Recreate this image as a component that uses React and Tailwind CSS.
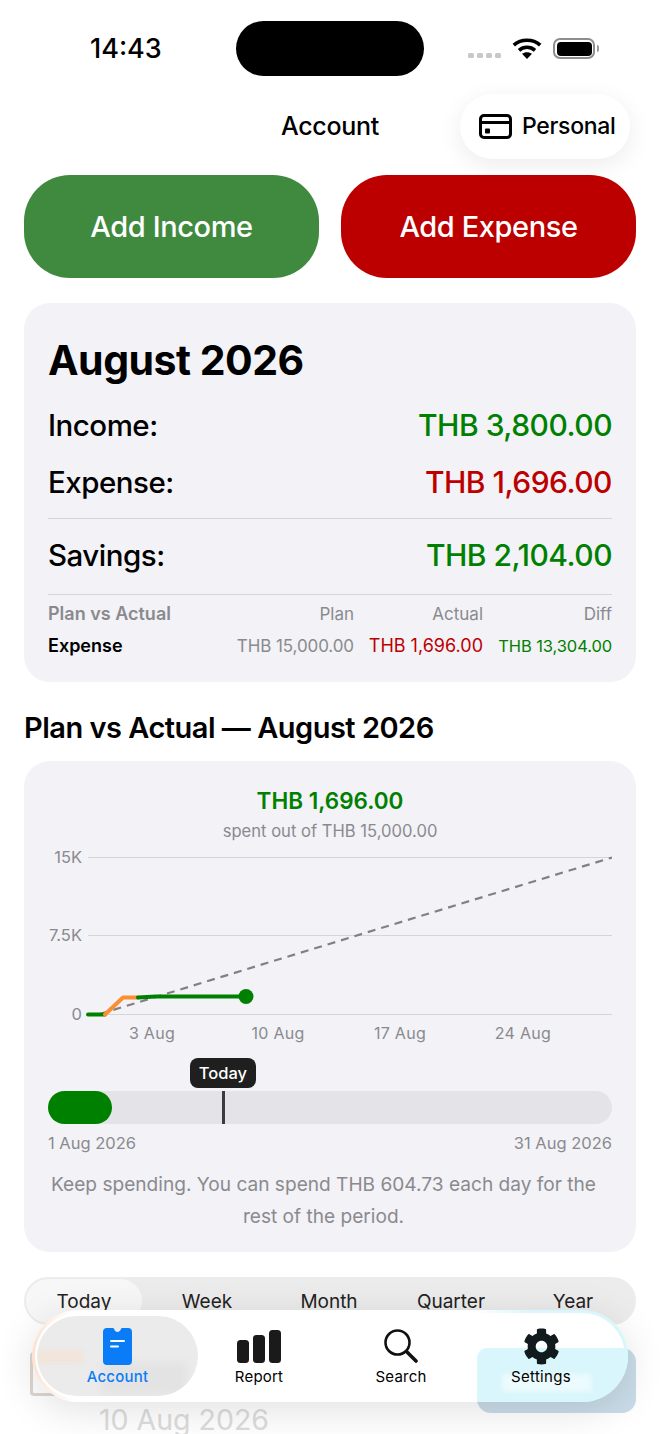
import React from 'react';
import { FaCog } from 'react-icons/fa';

const FONT = { fontFamily: 'Inter, "Liberation Sans", sans-serif' };

const SummaryRow = ({ label, value, color }) => (
  <div className="flex items-center justify-between">
    <span className="text-[29.5px] leading-[36px] font-medium tracking-[-0.5px] text-black">{label}</span>
    <span className={`text-[30px] leading-[36px] font-medium tracking-[-0.5px] ${color}`}>{value}</span>
  </div>
);

const CardIcon = () => (
  <svg width="33" height="25" viewBox="0 0 33 25" fill="none">
    <rect x="1.5" y="1.5" width="30" height="22" rx="3.5" stroke="black" strokeWidth="3" />
    <path d="M2 8.500h29" stroke="black" strokeWidth="3" />
    <rect x="6" y="14.500" width="5" height="5" rx="1" fill="black" />
  </svg>
);

const WifiIcon = () => (
  <svg width="30" height="21" viewBox="0 0 30 21" fill="none">
    <path d="M1.800 7.200C9 .6 21 .6 28.200 7.200" stroke="black" strokeWidth="3.600" />
    <path d="M7 12.300c4.500-4 11.500-4 16 0" stroke="black" strokeWidth="3.600" />
    <path d="M15 21l-5-5.200c2.800-2.200 7.200-2.200 10 0z" fill="black" />
  </svg>
);

const Chart = () => (
  <svg width="564" height="204" viewBox="0 -4 564 204" className="block" style={FONT}>
    <g stroke="#d4d4d9" strokeWidth="1">
      <line x1="40" y1="7.500" x2="564" y2="7.500" />
      <line x1="40" y1="85.500" x2="564" y2="85.500" />
      <line x1="40" y1="164.500" x2="564" y2="164.500" />
    </g>
    <g fill="#8a8a8e" fontSize="16.500" textAnchor="end">
      <text x="34" y="13">15K</text>
      <text x="34" y="91">7.5K</text>
      <text x="34" y="170">0</text>
    </g>
    <g fill="#8a8a8e" fontSize="16" letterSpacing="0.3" textAnchor="middle">
      <text x="104" y="189">3 Aug</text>
      <text x="230" y="189">10 Aug</text>
      <text x="352" y="189">17 Aug</text>
      <text x="475" y="189">24 Aug</text>
    </g>
    <line x1="52" y1="164" x2="564" y2="7.500" stroke="#808085" strokeWidth="2.200" strokeDasharray="8 6" />
    <path d="M40 164.500H57" stroke="#008000" strokeWidth="4" strokeLinecap="round" fill="none" />
    <path d="M57 164.500L75 147.500H90" stroke="#fb8f32" strokeWidth="4" strokeLinejoin="round" strokeLinecap="round" fill="none" />
    <path d="M90 147.500L108 146.500H198" stroke="#008000" strokeWidth="4" strokeLinecap="round" fill="none" />
    <circle cx="198" cy="146.500" r="7.500" fill="#008000" />
  </svg>
);

const TABS = ['Today', 'Week', 'Month', 'Quarter', 'Year'];

export default function App() {
  return (
    <div className="relative h-[1434px] w-[660px] overflow-hidden bg-white text-black" style={FONT}>
      {/* status bar */}
      <div className="flex h-[94px] items-start pt-[21px]">
        <span className="ml-[90px] mt-[10px] w-[146px] text-[27px] leading-[36px] font-medium">14:43</span>
        <div className="h-[55px] w-[188px] rounded-full bg-black" />
        <div className="ml-[44px] flex items-start pt-[17px]">
          <div className="mt-[15px] flex gap-[3px]">
            {[0, 1, 2, 3].map(i => <div key={i} className="h-[5px] w-[6px] rounded-[1.5px] bg-[#c8c8c8]" />)}
          </div>
          <div className="ml-[11px]"><WifiIcon /></div>
          <div className="relative ml-[11px] flex h-[21px] w-[42px] items-center justify-center rounded-[7px] border-2 border-[#8e8e8e] p-[1.5px]">
            <div className="h-full w-full rounded-[4px] bg-black" />
            <div className="absolute right-[-6px] h-[7px] w-[2.500px] rounded-r-full bg-[#9a9a9a]" />
          </div>
        </div>
      </div>

      {/* header */}
      <div className="relative mb-[16px] flex h-[65px] items-center justify-center">
        <span className="text-[25px] font-medium tracking-[-0.3px]">Account</span>
        <div className="absolute right-[30px] top-0 flex h-[65px] w-[170px] items-center gap-[10px] rounded-full bg-white pl-[19px] shadow-[0_6px_24px_rgba(0,0,0,0.08)]">
          <CardIcon />
          <span className="text-[23px] font-medium tracking-[-0.3px]">Personal</span>
        </div>
      </div>

      <div className="px-[24px]">
        {/* action buttons */}
        <div className="flex gap-[22px]">
          <div className="flex h-[103px] flex-1 items-center justify-center rounded-[46px] bg-[#408a40] text-[29px] font-medium tracking-[-0.4px] text-white">Add Income</div>
          <div className="flex h-[103px] flex-1 items-center justify-center rounded-[46px] bg-[#bc0000] text-[29px] font-medium tracking-[-0.4px] text-white">Add Expense</div>
        </div>

        {/* month summary */}
        <div className="mt-[25px] h-[379px] rounded-[26px] bg-[#f2f2f7] px-[24px] pt-[31px]">
          <div className="text-[41px] leading-[52px] font-bold tracking-[-0.5px]">August 2026</div>
          <div className="mt-[21px]"><SummaryRow label="Income:" value="THB 3,800.00" color="text-[#008000]" /></div>
          <div className="mt-[21px]"><SummaryRow label="Expense:" value="THB 1,696.00" color="text-[#bc0000]" /></div>
          <div className="mt-[18px] border-t border-[#d4d4d9] pt-[18px]">
            <SummaryRow label="Savings:" value="THB 2,104.00" color="text-[#008000]" />
          </div>
          <div className="mt-[21px] border-t border-[#d4d4d9] pt-[7px]">
            <div className="flex items-center text-[17px] leading-[24px] text-[#8a8a8e]">
              <span className="flex-1 text-[18px] font-semibold">Plan vs Actual</span>
              <span>Plan</span>
              <span className="w-[129px] text-right">Actual</span>
              <span className="w-[129px] text-right">Diff</span>
            </div>
            <div className="mt-[8px] flex items-center text-[17px] leading-[24px] tracking-[-0.1px]">
              <span className="flex-1 text-[18px] font-semibold tracking-normal">Expense</span>
              <span className="text-[#8a8a8e]">THB 15,000.00</span>
              <span className="w-[129px] text-right text-[18px] tracking-normal text-[#bc0000]">THB 1,696.00</span>
              <span className="w-[129px] text-right text-[16.500px] text-[#008000]">THB 13,304.00</span>
            </div>
          </div>
        </div>

        <div className="mt-[27px] h-[38px] text-[29px] leading-[38px] font-semibold tracking-[-0.5px]">Plan vs Actual — August 2026</div>

        {/* plan chart */}
        <div className="mt-[14px] h-[491px] rounded-[26px] bg-[#f2f2f7] px-[24px] pt-[25px]">
          <div className="text-center text-[22.500px] leading-[30px] font-semibold text-[#008000]">THB 1,696.00</div>
          <div className="mt-[3px] text-center text-[16.600px] leading-[24px] text-[#8a8a8e]">spent out of THB 15,000.00</div>
          <div className="mt-[3px]"><Chart /></div>
          <div className="relative mt-[41px] h-[33px] rounded-full bg-[#e3e3e8]">
            <div className="h-full w-[64px] rounded-full bg-[#008000]" />
            <div className="absolute left-[174px] top-0 h-full w-[3px] bg-[#3c3c3e]" />
            <div className="absolute left-[142px] top-[-33px] flex h-[30px] w-[66px] items-center justify-center rounded-[8px] bg-[#1f1f1f] text-[16.500px] font-medium text-white">Today</div>
          </div>
          <div className="mt-[7px] flex justify-between text-[16.500px] leading-[24px] text-[#8a8a8e]">
            <span>1 Aug 2026</span>
            <span>31 Aug 2026</span>
          </div>
          <div className="mt-[13px] whitespace-nowrap pr-[13px] text-center text-[19.100px] leading-[32px] text-[#8a8a8e]">
            Keep spending. You can spend THB 604.73 each day for the<br />rest of the period.
          </div>
        </div>

        {/* period tabs */}
        <div className="mt-[25px] flex h-[48px] items-center rounded-full bg-[#ececec]">
          {TABS.map((t, i) => (
            <div key={t} className={`flex h-[44px] items-center justify-center rounded-full pt-[3px] text-[19px] text-[#222] ${i === 0 ? 'ml-[2px] mr-[4px] w-[116px] bg-[#f7f7f7]' : 'w-[122px]'}`}>{t}</div>
          ))}
        </div>
      </div>

      {/* list row behind the tab bar */}
      <div className="absolute left-[99px] top-[1406px] text-[28.500px] leading-[28px] text-[#dcdcdc]">10 Aug 2026</div>
      <div className="absolute left-[30px] top-[1352px] h-[44px] w-[48px] rounded-[4px] border-[3px] border-[#ddd6d0]" />
      <div className="absolute left-[477px] top-[1348px] h-[65px] w-[159px] rounded-[14px] bg-[#c9dce8]" />

      {/* floating tab bar */}
      <div className="absolute left-[32px] top-[1310px] h-[92px] w-[596px] overflow-hidden rounded-[46px] bg-[linear-gradient(90deg,#fbe3d2_0%,#ffffff_7%,#ffffff_74%,#d8f6fb_84%,#d8f6fb_100%)] shadow-[0_8px_40px_rgba(0,0,0,0.12)]">
        <div className="absolute inset-[3px] rounded-[44px] bg-white" />
        <div className="absolute bottom-0 left-[445px] right-0 top-[38px] rounded-tl-[10px] bg-[#d8f6fb]" />
        <div className="absolute left-[470px] top-[64px] h-[18px] w-[90px] bg-white/50 blur-[2px]" />
        <div className="relative flex h-full items-start">
          <div className="relative ml-[5px] mt-[6px] flex h-[80px] w-[161px] flex-col items-center overflow-hidden rounded-[40px] bg-[#ebebeb] pt-[10px] text-[#0a7cf7]">
            <div className="absolute left-0 top-[34px] h-[14px] w-[46px] bg-[#fbdcc4]/40 blur-[2px]" />
            <div className="absolute left-[65px] top-[46px] h-[32px] w-[85px] bg-black/[0.03] blur-[4px]" />
            <div className="relative flex h-[40px] items-center">
              <svg width="29" height="37" viewBox="0 0 29 37">
                <path d="M4 0h5.500c1 0 1.500.5 1.800 1.500.5 1.500 1.700 2.500 3.200 2.500s2.700-1 3.200-2.500c.3-1 .8-1.500 1.800-1.500H25a4 4 0 0 1 4 4v29a4 4 0 0 1-4 4H4a4 4 0 0 1-4-4V4a4 4 0 0 1 4-4z" fill="#0a7cf7" />
                <path d="M8 13h13M8 18.500h7" stroke="white" strokeWidth="2" strokeLinecap="round" />
              </svg>
            </div>
            <span className="relative mt-[1px] text-[15px] leading-[20px] font-medium tracking-[0.2px]">Account</span>
          </div>
          <div className="flex w-[122px] flex-col items-center pt-[16px]">
            <div className="flex h-[40px] items-center">
              <svg width="44" height="33" viewBox="0 0 44 33" fill="#1a1a1a">
                <rect x="0" y="10" width="12" height="23" rx="3.500" />
                <rect x="16" y="5" width="12" height="28" rx="3.500" />
                <rect x="32" y="0" width="12" height="33" rx="3.500" />
              </svg>
            </div>
            <span className="mt-[1px] text-[15px] leading-[20px] tracking-[0.2px]">Report</span>
          </div>
          <div className="ml-[20px] flex w-[122px] flex-col items-center pt-[16px]">
            <div className="flex h-[40px] items-center">
              <svg width="34" height="34" viewBox="0 0 34 34" fill="none" stroke="#111" strokeWidth="2.600">
                <circle cx="13.500" cy="13.500" r="12" />
                <path d="M22.500 22.500L32 32" strokeWidth="3.600" strokeLinecap="round" />
              </svg>
            </div>
            <span className="mt-[1px] text-[15px] leading-[20px] tracking-[0.2px]">Search</span>
          </div>
          <div className="ml-[18px] flex w-[122px] flex-col items-center pt-[16px]">
            <div className="flex h-[40px] items-center">
              <FaCog size={37} color="#111a1c" />
            </div>
            <span className="mt-[1px] text-[15px] leading-[20px] tracking-[0.3px]">Settings</span>
          </div>
        </div>
      </div>
    </div>
  );
}
